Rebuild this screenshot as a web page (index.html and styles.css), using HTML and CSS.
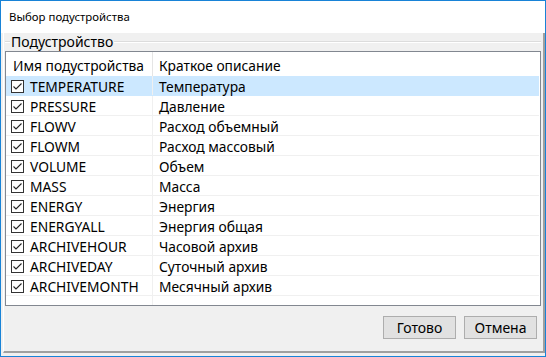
FILE: index.html
```html
<!DOCTYPE html>
<html lang="ru">
<head>
<meta charset="utf-8">
<title>Выбор подустройства</title>
<link rel="stylesheet" href="styles.css">
</head>
<body>
<div class="window">
  <div class="titlebar"><span class="title">Выбор подустройства</span></div>
  <div class="client">
    <div class="panel">
      <div class="group-head">
        <span class="gline-start"></span>
        <span class="glabel">Подустройство</span>
        <span class="gline"></span>
      </div>
      <div class="list">
        <div class="header">
          <div class="hcell c1">Имя подустройства</div>
          <div class="hcell c2">Краткое описание</div>
        </div>
        <div class="row selected"><div class="cell c1"><span class="cb"><svg viewBox="0 0 13 13" width="13" height="13"><rect x="0.5" y="0.5" width="12" height="12" fill="#fff" stroke="#333"/><path d="M2.5 6.5 L5 9 L10.5 3.5" fill="none" stroke="#222" stroke-width="1.1"/></svg></span>TEMPERATURE</div><div class="cell c2">Температура</div></div>
        <div class="row"><div class="cell c1"><span class="cb"><svg viewBox="0 0 13 13" width="13" height="13"><rect x="0.5" y="0.5" width="12" height="12" fill="#fff" stroke="#333"/><path d="M2.5 6.5 L5 9 L10.5 3.5" fill="none" stroke="#222" stroke-width="1.1"/></svg></span>PRESSURE</div><div class="cell c2">Давление</div></div>
        <div class="row"><div class="cell c1"><span class="cb"><svg viewBox="0 0 13 13" width="13" height="13"><rect x="0.5" y="0.5" width="12" height="12" fill="#fff" stroke="#333"/><path d="M2.5 6.5 L5 9 L10.5 3.5" fill="none" stroke="#222" stroke-width="1.1"/></svg></span>FLOWV</div><div class="cell c2">Расход объемный</div></div>
        <div class="row"><div class="cell c1"><span class="cb"><svg viewBox="0 0 13 13" width="13" height="13"><rect x="0.5" y="0.5" width="12" height="12" fill="#fff" stroke="#333"/><path d="M2.5 6.5 L5 9 L10.5 3.5" fill="none" stroke="#222" stroke-width="1.1"/></svg></span>FLOWM</div><div class="cell c2">Расход массовый</div></div>
        <div class="row"><div class="cell c1"><span class="cb"><svg viewBox="0 0 13 13" width="13" height="13"><rect x="0.5" y="0.5" width="12" height="12" fill="#fff" stroke="#333"/><path d="M2.5 6.5 L5 9 L10.5 3.5" fill="none" stroke="#222" stroke-width="1.1"/></svg></span>VOLUME</div><div class="cell c2">Объем</div></div>
        <div class="row"><div class="cell c1"><span class="cb"><svg viewBox="0 0 13 13" width="13" height="13"><rect x="0.5" y="0.5" width="12" height="12" fill="#fff" stroke="#333"/><path d="M2.5 6.5 L5 9 L10.5 3.5" fill="none" stroke="#222" stroke-width="1.1"/></svg></span>MASS</div><div class="cell c2">Масса</div></div>
        <div class="row"><div class="cell c1"><span class="cb"><svg viewBox="0 0 13 13" width="13" height="13"><rect x="0.5" y="0.5" width="12" height="12" fill="#fff" stroke="#333"/><path d="M2.5 6.5 L5 9 L10.5 3.5" fill="none" stroke="#222" stroke-width="1.1"/></svg></span>ENERGY</div><div class="cell c2">Энергия</div></div>
        <div class="row"><div class="cell c1"><span class="cb"><svg viewBox="0 0 13 13" width="13" height="13"><rect x="0.5" y="0.5" width="12" height="12" fill="#fff" stroke="#333"/><path d="M2.5 6.5 L5 9 L10.5 3.5" fill="none" stroke="#222" stroke-width="1.1"/></svg></span>ENERGYALL</div><div class="cell c2">Энергия общая</div></div>
        <div class="row"><div class="cell c1"><span class="cb"><svg viewBox="0 0 13 13" width="13" height="13"><rect x="0.5" y="0.5" width="12" height="12" fill="#fff" stroke="#333"/><path d="M2.5 6.5 L5 9 L10.5 3.5" fill="none" stroke="#222" stroke-width="1.1"/></svg></span>ARCHIVEHOUR</div><div class="cell c2">Часовой архив</div></div>
        <div class="row"><div class="cell c1"><span class="cb"><svg viewBox="0 0 13 13" width="13" height="13"><rect x="0.5" y="0.5" width="12" height="12" fill="#fff" stroke="#333"/><path d="M2.5 6.5 L5 9 L10.5 3.5" fill="none" stroke="#222" stroke-width="1.1"/></svg></span>ARCHIVEDAY</div><div class="cell c2">Суточный архив</div></div>
        <div class="row"><div class="cell c1"><span class="cb"><svg viewBox="0 0 13 13" width="13" height="13"><rect x="0.5" y="0.5" width="12" height="12" fill="#fff" stroke="#333"/><path d="M2.5 6.5 L5 9 L10.5 3.5" fill="none" stroke="#222" stroke-width="1.1"/></svg></span>ARCHIVEMONTH</div><div class="cell c2">Месячный архив</div></div>
        <div class="row empty"><div class="cell c1"></div><div class="cell c2"></div></div>
      </div>
      <div class="buttons">
        <button class="btn">Готово</button>
        <button class="btn">Отмена</button>
      </div>
    </div>
  </div>
</div>
</body>
</html>
```

FILE: styles.css
```css
html, body {
  margin: 0;
  padding: 0;
  background: #ffffff;
}
body {
  font-family: "Noto Sans", "Open Sans", sans-serif;
  color: #000;
}
.window {
  width: 546px;
  height: 357px;
  box-sizing: border-box;
  border: 1px solid #1883d7;
  display: flex;
  flex-direction: column;
  overflow: hidden;
}
.titlebar {
  height: 32px;
  flex: none;
  background: #ffffff;
  display: flex;
  align-items: center;
  padding-left: 8px;
  font-size: 11.4px;
}
.title {
  position: relative;
  top: -1px;
}
.client {
  flex: 1;
  background: #f0f0f0;
  padding: 0 0 3px 2px;
  display: flex;
}
.panel {
  flex: 1;
  border-left: 1px solid #ffffff;
  border-right: 2px solid #a0a0a0;
  border-bottom: 2px solid #a0a0a0;
  display: flex;
  flex-direction: column;
}
.group-head {
  height: 17px;
  margin-left: 1px;
  margin-right: 2px;
  display: flex;
  align-items: center;
  font-size: 14px;
  line-height: 17px;
}
.gline-start {
  width: 5px;
  height: 0;
  border-top: 1px solid #dcdcdc;
  border-bottom: 1px solid #ffffff;
}
.gline {
  flex: 1;
  height: 0;
  border-top: 1px solid #dcdcdc;
  border-bottom: 1px solid #ffffff;
}
.glabel {
  padding: 0 1px 0 1px;
  color: #000;
}
.list {
  margin-top: 1px;
  margin-left: 1px;
  width: 536px;
  height: 255px;
  box-sizing: border-box;
  border: 1px solid #828790;
  background: #ffffff;
  font-size: 13.8px;
  overflow: hidden;
}
.header {
  display: flex;
  height: 24px;
}
.hcell {
  display: flex;
  align-items: center;
  box-sizing: border-box;
  white-space: nowrap;
  padding-top: 2px;
}
.hcell.c1 {
  width: 147px;
  padding-left: 7px;
  border-right: 1px solid #e5e5e5;
}
.hcell.c2 {
  flex: 1;
  padding-left: 6px;
}
.row {
  display: flex;
  height: 20px;
  box-sizing: border-box;
  border-bottom: 1px solid #f0f0f0;
  margin-right: 1px;
}
.row.selected {
  background: #cce8ff;
  border-bottom-color: #cce8ff;
}
.row.empty {
  border-bottom: none;
}
.cell {
  display: flex;
  align-items: center;
  box-sizing: border-box;
  white-space: nowrap;
  padding-top: 1px;
}
.cell.c1 {
  width: 147px;
  padding-left: 5px;
  border-right: 1px solid #f0f0f0;
}
.cell.c2 {
  flex: 1;
  padding-left: 6px;
}
.cb {
  width: 13px;
  height: 13px;
  margin-right: 6px;
  display: block;
}
.cb svg {
  display: block;
}
.buttons {
  display: flex;
  justify-content: flex-end;
  gap: 8px;
  margin-top: 10px;
  padding-right: 6px;
}
.btn {
  width: 73px;
  height: 23px;
  box-sizing: border-box;
  border: 1px solid #adadad;
  background: #e1e1e1;
  font-family: "Noto Sans", "Open Sans", sans-serif;
  font-size: 14px;
  color: #000;
  padding: 0;
  border-radius: 0;
}
```
